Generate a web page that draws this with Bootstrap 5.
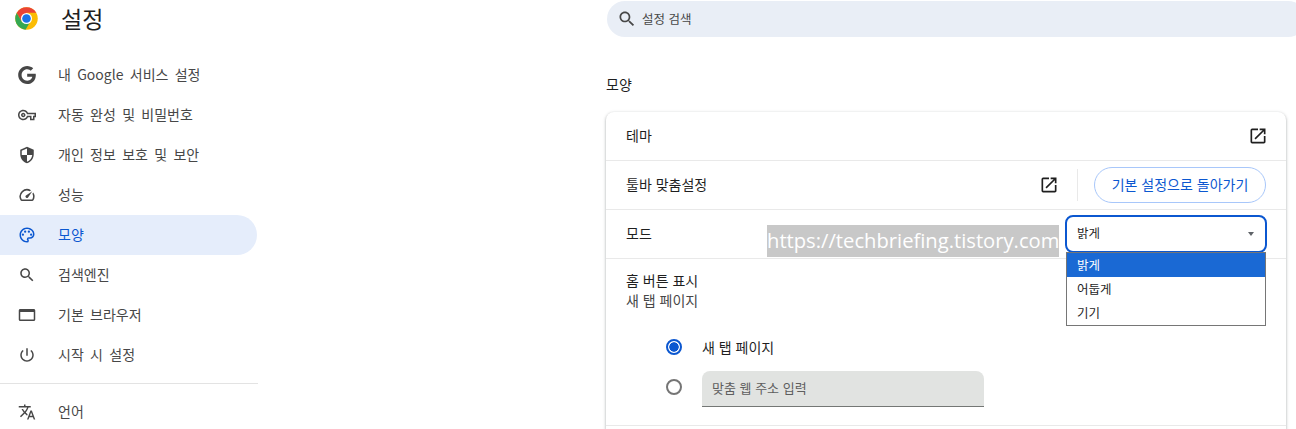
<!DOCTYPE html>
<html lang="ko">
<head>
  <meta charset="UTF-8">
  <meta name="viewport" content="width=device-width, initial-scale=1.0">
  <title>설정 - 모양</title>
  <link href="https://cdn.jsdelivr.net/npm/bootstrap@5.3.0/dist/css/bootstrap.min.css" rel="stylesheet">
  <style>
    body {
      font-family: "Noto Sans CJK KR", "Roboto", sans-serif;
      font-size: 14px;
      color: #1f1f1f;
      background: #fff;
      overflow: hidden;
      height: 429px;
    }
    svg { fill: currentColor; flex-shrink: 0; display: block; }
    .side-col { width: 258px; flex-shrink: 0; }
    .side-head { height: 36px; padding-left: 15px; gap: 23px; }
    .side-title { font-size: 23px; line-height: 1; }
    .side-nav { margin-top: 19px; }
    .side-link {
      height: 40px;
      padding-left: 18px;
      gap: 22px;
      color: #474747;
      font-size: 14px;
      word-spacing: 2.4px;
      text-decoration: none;
      border-radius: 0 20px 20px 0;
      width: 257px;
    }
    .side-link span { padding-bottom: 2px; }
    .side-link.is-on { background: #e5edfb; color: #0b57d0; }
    .side-rule { margin: 8px 0; border-color: #e3e3e3; opacity: 1; }
    .main-col { width: 690px; margin-left: 348px; flex-shrink: 0; }
    .search-pill {
      height: 36px;
      margin: 1px -10px 0 1px;
      background: #e9eef6;
      border-radius: 18px;
      padding-left: 10px;
      gap: 5px;
      color: #474747;
      font-size: 12.5px;
    }
    .section-name { margin: 37px 0 18px; font-size: 14px; line-height: 20px; height: 20px; }
    .panel {
      width: 680px;
      border: 0;
      border-radius: 8px 8px 0 0;
      box-shadow: 0 1px 2px rgba(60,64,67,.3), 0 1px 3px 1px rgba(60,64,67,.15);
    }
    .panel .list-group-item { border-color: #e9e9e9; padding: 0 20px; background: transparent; color: #1f1f1f; }
    .row-48 { height: 49px; }
    .row-48 > span:first-child { padding-bottom: 2px; }
    .row-end { height: 3px; }
    .open-ico { color: #1f1f1f; }
    .open-end { margin-right: -2px; }
    .v-sep { width: 1px; height: 32px; background: #e9e9e9; margin: 0 16px 0 18px; }
    .reset-btn {
      width: 172px;
      height: 36px;
      padding: 0 0 2px;
      font-size: 14px;
      color: #0b57d0;
      border: 1px solid #a8c7fa;
      border-radius: 18px;
      background: #fff;
    }
    .mode-wrap { position: relative; width: 202px; margin-right: -1px; }
    .mode-box {
      height: 38px;
      border: 2px solid #0b57d0;
      border-radius: 8px;
      padding: 0 11px 1px 10px;
      font-size: 12.5px;
    }
    .caret-down {
      width: 0; height: 0;
      border-left: 3.5px solid transparent;
      border-right: 3.5px solid transparent;
      border-top: 4px solid #5f6368;
    }
    .mode-menu {
      position: absolute;
      top: 37px;
      left: 1px;
      width: 200px;
      min-width: 0;
      margin: 0;
      padding: 0;
      border: 1px solid #767676;
      border-radius: 0;
      z-index: 5;
      font-size: 12.5px;
    }
    .mode-menu .dropdown-item { height: 24px; line-height: 23px; padding: 0 10px; color: #1f1f1f; }
    .mode-menu .dropdown-item.active { background: #1a69d4; color: #fff; }
    .home-row { height: 167px; padding-top: 11px !important; }
    .sub-label { color: #474747; margin-top: -1px; }
    .radio-list { margin: 24px 0 0 61px; }
    .radio-line { gap: 20px; height: 24px; }
    .radio-dot {
      width: 16px; height: 16px;
      margin: 0;
      border: 2px solid #757575;
      background: #fff;
      float: none;
      flex-shrink: 0;
    }
    .radio-dot:checked {
      border-color: #0b57d0;
      background: radial-gradient(circle, #0b57d0 0 4.4px, #fff 5px);
    }
    .url-line { margin-top: 12px; gap: 20px; height: 36px; }
    .url-line .radio-dot { margin-top: 8px; }
    .url-input {
      width: 282px;
      height: 36px;
      background: #e1e3e1;
      border: 0;
      border-bottom: 1px solid #747775;
      border-radius: 8px 8px 0 0;
      padding: 0 10px 2px;
      font-size: 13px;
      color: #474747;
    }
    .url-input::placeholder { color: #5e5e5e; opacity: 1; }
    .watermark {
      position: absolute;
      left: 767px;
      top: 225px;
      width: 292px;
      height: 32px;
      line-height: 31px;
      background: #c8c8c8;
      color: #fff;
      font-family: "Open Sans", sans-serif;
      font-size: 20.2px;
      white-space: nowrap;
      z-index: 4;
    }
  </style>
</head>
<body>
  <div class="d-flex">
    <!-- 왼쪽 메뉴 -->
    <div class="side-col">
      <div class="side-head d-flex align-items-center">
        <svg width="23" height="23" viewBox="0 0 48 48">
          <circle cx="24" cy="24" r="23.5" fill="#fbbc04"/>
          <path d="M24 .5A23.5 23.5 0 0 0 3.6 12.3L13.8 30 24 12h20.4A23.5 23.5 0 0 0 24 .5z" fill="#ea4335"/>
          <path d="M3.6 12.3A23.5 23.5 0 0 0 22 47.4L32.7 29 13.8 30z" fill="#34a853"/>
          <circle cx="24" cy="24" r="11.5" fill="#fff"/>
          <circle cx="24" cy="24" r="9" fill="#1a73e8"/>
        </svg>
        <span class="side-title">설정</span>
      </div>
      <nav class="side-nav">
        <a class="side-link d-flex align-items-center" href="#">
          <svg width="18" height="18" viewBox="0 0 24 24"><path d="M12.24 10.285V14.4h6.806c-.275 1.765-2.056 5.174-6.806 5.174-4.095 0-7.439-3.389-7.439-7.574s3.345-7.574 7.439-7.574c2.33 0 3.891.989 4.785 1.849l3.254-3.138C18.189 1.186 15.479 0 12.24 0c-6.635 0-12 5.365-12 12s5.365 12 12 12c6.926 0 11.52-4.869 11.52-11.726 0-.788-.085-1.39-.189-1.989H12.24z"/></svg>
          <span>내 Google 서비스 설정</span>
        </a>
        <a class="side-link d-flex align-items-center" href="#">
          <svg width="18" height="18" viewBox="0 0 24 24"><path d="M22 19h-6v-4h-2.68c-1.14 2.42-3.6 4-6.32 4-3.86 0-7-3.14-7-7s3.14-7 7-7c2.72 0 5.17 1.58 6.32 4H24v6h-2v4zm-4-2h2v-4h2v-2H11.94l-.23-.67C11.01 8.34 9.11 7 7 7c-2.76 0-5 2.24-5 5s2.24 5 5 5c2.11 0 4.01-1.34 4.71-3.33l.23-.67H18v4zM7 15c-1.65 0-3-1.35-3-3s1.35-3 3-3 3 1.35 3 3-1.35 3-3 3zm0-4c-.55 0-1 .45-1 1s.45 1 1 1 1-.45 1-1-.45-1-1-1z"/></svg>
          <span>자동 완성 및 비밀번호</span>
        </a>
        <a class="side-link d-flex align-items-center" href="#">
          <svg width="18" height="18" viewBox="0 0 24 24"><path d="M12 1L3 5v6c0 5.55 3.84 10.74 9 12 5.16-1.26 9-6.45 9-12V5l-9-4zm0 10.99h7c-.53 4.12-3.28 7.79-7 8.94V12H5V6.3l7-3.11v8.8z"/></svg>
          <span>개인 정보 보호 및 보안</span>
        </a>
        <a class="side-link d-flex align-items-center" href="#">
          <svg width="18" height="18" viewBox="0 0 24 24"><path d="M20.38 8.57l-1.23 1.85a8 8 0 0 1-.22 7.58H5.07A8 8 0 0 1 15.58 6.85l1.85-1.23A10 10 0 0 0 3.35 19a2 2 0 0 0 1.72 1h13.85a2 2 0 0 0 1.74-1 10 10 0 0 0-.27-10.44zm-9.79 6.84a2 2 0 0 0 2.83 0l5.66-8.49-8.49 5.66a2 2 0 0 0 0 2.83z"/></svg>
          <span>성능</span>
        </a>
        <a class="side-link is-on d-flex align-items-center" href="#">
          <svg width="18" height="18" viewBox="0 0 24 24"><path d="M12 22C6.49 22 2 17.51 2 12S6.49 2 12 2s10 4.04 10 9c0 3.31-2.69 6-6 6h-1.77c-.28 0-.5.22-.5.5 0 .12.05.23.13.33.41.47.64 1.06.64 1.67A2.5 2.5 0 0 1 12 22zm0-18c-4.41 0-8 3.59-8 8s3.59 8 8 8c.28 0 .5-.22.5-.5a.54.54 0 0 0-.14-.35c-.41-.46-.63-1.05-.63-1.65a2.5 2.5 0 0 1 2.5-2.5H16c2.21 0 4-1.79 4-4 0-3.86-3.59-7-8-7z"/><circle cx="6.5" cy="11.5" r="1.5"/><circle cx="9.5" cy="7.5" r="1.5"/><circle cx="14.5" cy="7.5" r="1.5"/><circle cx="17.5" cy="11.5" r="1.5"/></svg>
          <span>모양</span>
        </a>
        <a class="side-link d-flex align-items-center" href="#">
          <svg width="18" height="18" viewBox="0 0 24 24"><path d="M15.5 14h-.79l-.28-.27C15.41 12.59 16 11.11 16 9.5 16 5.91 13.09 3 9.5 3S3 5.91 3 9.5 5.91 16 9.5 16c1.61 0 3.09-.59 4.23-1.57l.27.28v.79l5 4.99L20.49 19l-4.99-5zm-6 0C7.01 14 5 11.99 5 9.5S7.01 5 9.5 5 14 7.01 14 9.5 11.99 14 9.5 14z"/></svg>
          <span>검색엔진</span>
        </a>
        <a class="side-link d-flex align-items-center" href="#">
          <svg width="18" height="18" viewBox="0 0 24 24"><path d="M21 4H3c-1.1 0-2 .9-2 2v12c0 1.1.9 2 2 2h18c1.1 0 2-.9 2-2V6c0-1.1-.9-2-2-2zm0 14H3V8h18v10z"/></svg>
          <span>기본 브라우저</span>
        </a>
        <a class="side-link d-flex align-items-center" href="#">
          <svg width="18" height="18" viewBox="0 0 24 24"><path d="M13 3h-2v10h2V3zm4.83 2.17l-1.42 1.42C17.99 7.86 19 9.81 19 12c0 3.87-3.13 7-7 7s-7-3.13-7-7c0-2.19 1.01-4.14 2.58-5.42L6.17 5.17C4.23 6.82 3 9.26 3 12c0 4.97 4.03 9 9 9s9-4.03 9-9c0-2.74-1.23-5.18-3.17-6.83z"/></svg>
          <span>시작 시 설정</span>
        </a>
        <hr class="side-rule">
        <a class="side-link d-flex align-items-center" href="#">
          <svg width="18" height="18" viewBox="0 0 24 24"><path d="M12.87 15.07l-2.54-2.51.03-.03c1.74-1.94 2.98-4.17 3.71-6.53H17V4h-7V2H8v2H1v1.99h11.17C11.5 7.92 10.44 9.75 9 11.35 8.07 10.32 7.3 9.19 6.69 8h-2c.73 1.63 1.73 3.17 2.98 4.56l-5.09 5.02L4 19l5-5 3.11 3.11.76-2.04zM18.5 10h-2L12 22h2l1.12-3h4.75L21 22h2l-4.5-12zm-2.62 7l1.62-4.33L19.12 17h-3.24z"/></svg>
          <span>언어</span>
        </a>
      </nav>
    </div>

    <!-- 본문 -->
    <div class="main-col">
      <div class="search-pill d-flex align-items-center">
        <svg width="20" height="20" viewBox="0 0 24 24"><path d="M15.5 14h-.79l-.28-.27C15.41 12.59 16 11.11 16 9.5 16 5.91 13.09 3 9.5 3S3 5.91 3 9.5 5.91 16 9.5 16c1.61 0 3.09-.59 4.23-1.57l.27.28v.79l5 4.99L20.49 19l-4.99-5zm-6 0C7.01 14 5 11.99 5 9.5S7.01 5 9.5 5 14 7.01 14 9.5 11.99 14 9.5 14z"/></svg>
        <span>설정 검색</span>
      </div>
      <div class="section-name">모양</div>
      <div class="card panel">
        <ul class="list-group list-group-flush">
          <li class="list-group-item row-48 d-flex align-items-center justify-content-between">
            <span>테마</span>
            <svg class="open-ico open-end" width="20" height="20" viewBox="0 0 24 24"><path d="M19 19H5V5h7V3H5a2 2 0 0 0-2 2v14a2 2 0 0 0 2 2h14c1.1 0 2-.9 2-2v-7h-2v7zM14 3v2h3.59l-9.83 9.83 1.41 1.41L19 6.41V10h2V3h-7z"/></svg>
          </li>
          <li class="list-group-item row-48 d-flex align-items-center">
            <span class="me-auto">툴바 맞춤설정</span>
            <svg class="open-ico" width="20" height="20" viewBox="0 0 24 24"><path d="M19 19H5V5h7V3H5a2 2 0 0 0-2 2v14a2 2 0 0 0 2 2h14c1.1 0 2-.9 2-2v-7h-2v7zM14 3v2h3.59l-9.83 9.83 1.41 1.41L19 6.41V10h2V3h-7z"/></svg>
            <div class="v-sep"></div>
            <button class="btn reset-btn" type="button">기본 설정으로 돌아가기</button>
          </li>
          <li class="list-group-item row-48 d-flex align-items-center justify-content-between">
            <span>모드</span>
            <div class="mode-wrap">
              <div class="mode-box d-flex align-items-center justify-content-between">
                <span>밝게</span>
                <span class="caret-down"></span>
              </div>
              <div class="dropdown-menu show mode-menu">
                <a class="dropdown-item active" href="#">밝게</a>
                <a class="dropdown-item" href="#">어둡게</a>
                <a class="dropdown-item" href="#">기기</a>
              </div>
            </div>
          </li>
          <li class="list-group-item home-row">
            <div>홈 버튼 표시</div>
            <div class="sub-label">새 탭 페이지</div>
            <div class="radio-list">
              <div class="form-check d-flex align-items-center radio-line p-0 m-0">
                <input class="form-check-input radio-dot" type="radio" name="homePage" id="homeNtp" checked>
                <label class="form-check-label" for="homeNtp">새 탭 페이지</label>
              </div>
              <div class="form-check d-flex align-items-start url-line p-0 mb-0">
                <input class="form-check-input radio-dot" type="radio" name="homePage" id="homeUrl">
                <input class="form-control url-input" type="text" placeholder="맞춤 웹 주소 입력">
              </div>
            </div>
          </li>
          <li class="list-group-item row-end"></li>
        </ul>
      </div>
    </div>
  </div>
  <div class="watermark">https://techbriefing.tistory.com</div>

  <script src="https://cdn.jsdelivr.net/npm/bootstrap@5.3.0/dist/js/bootstrap.bundle.min.js"></script>
</body>
</html>
